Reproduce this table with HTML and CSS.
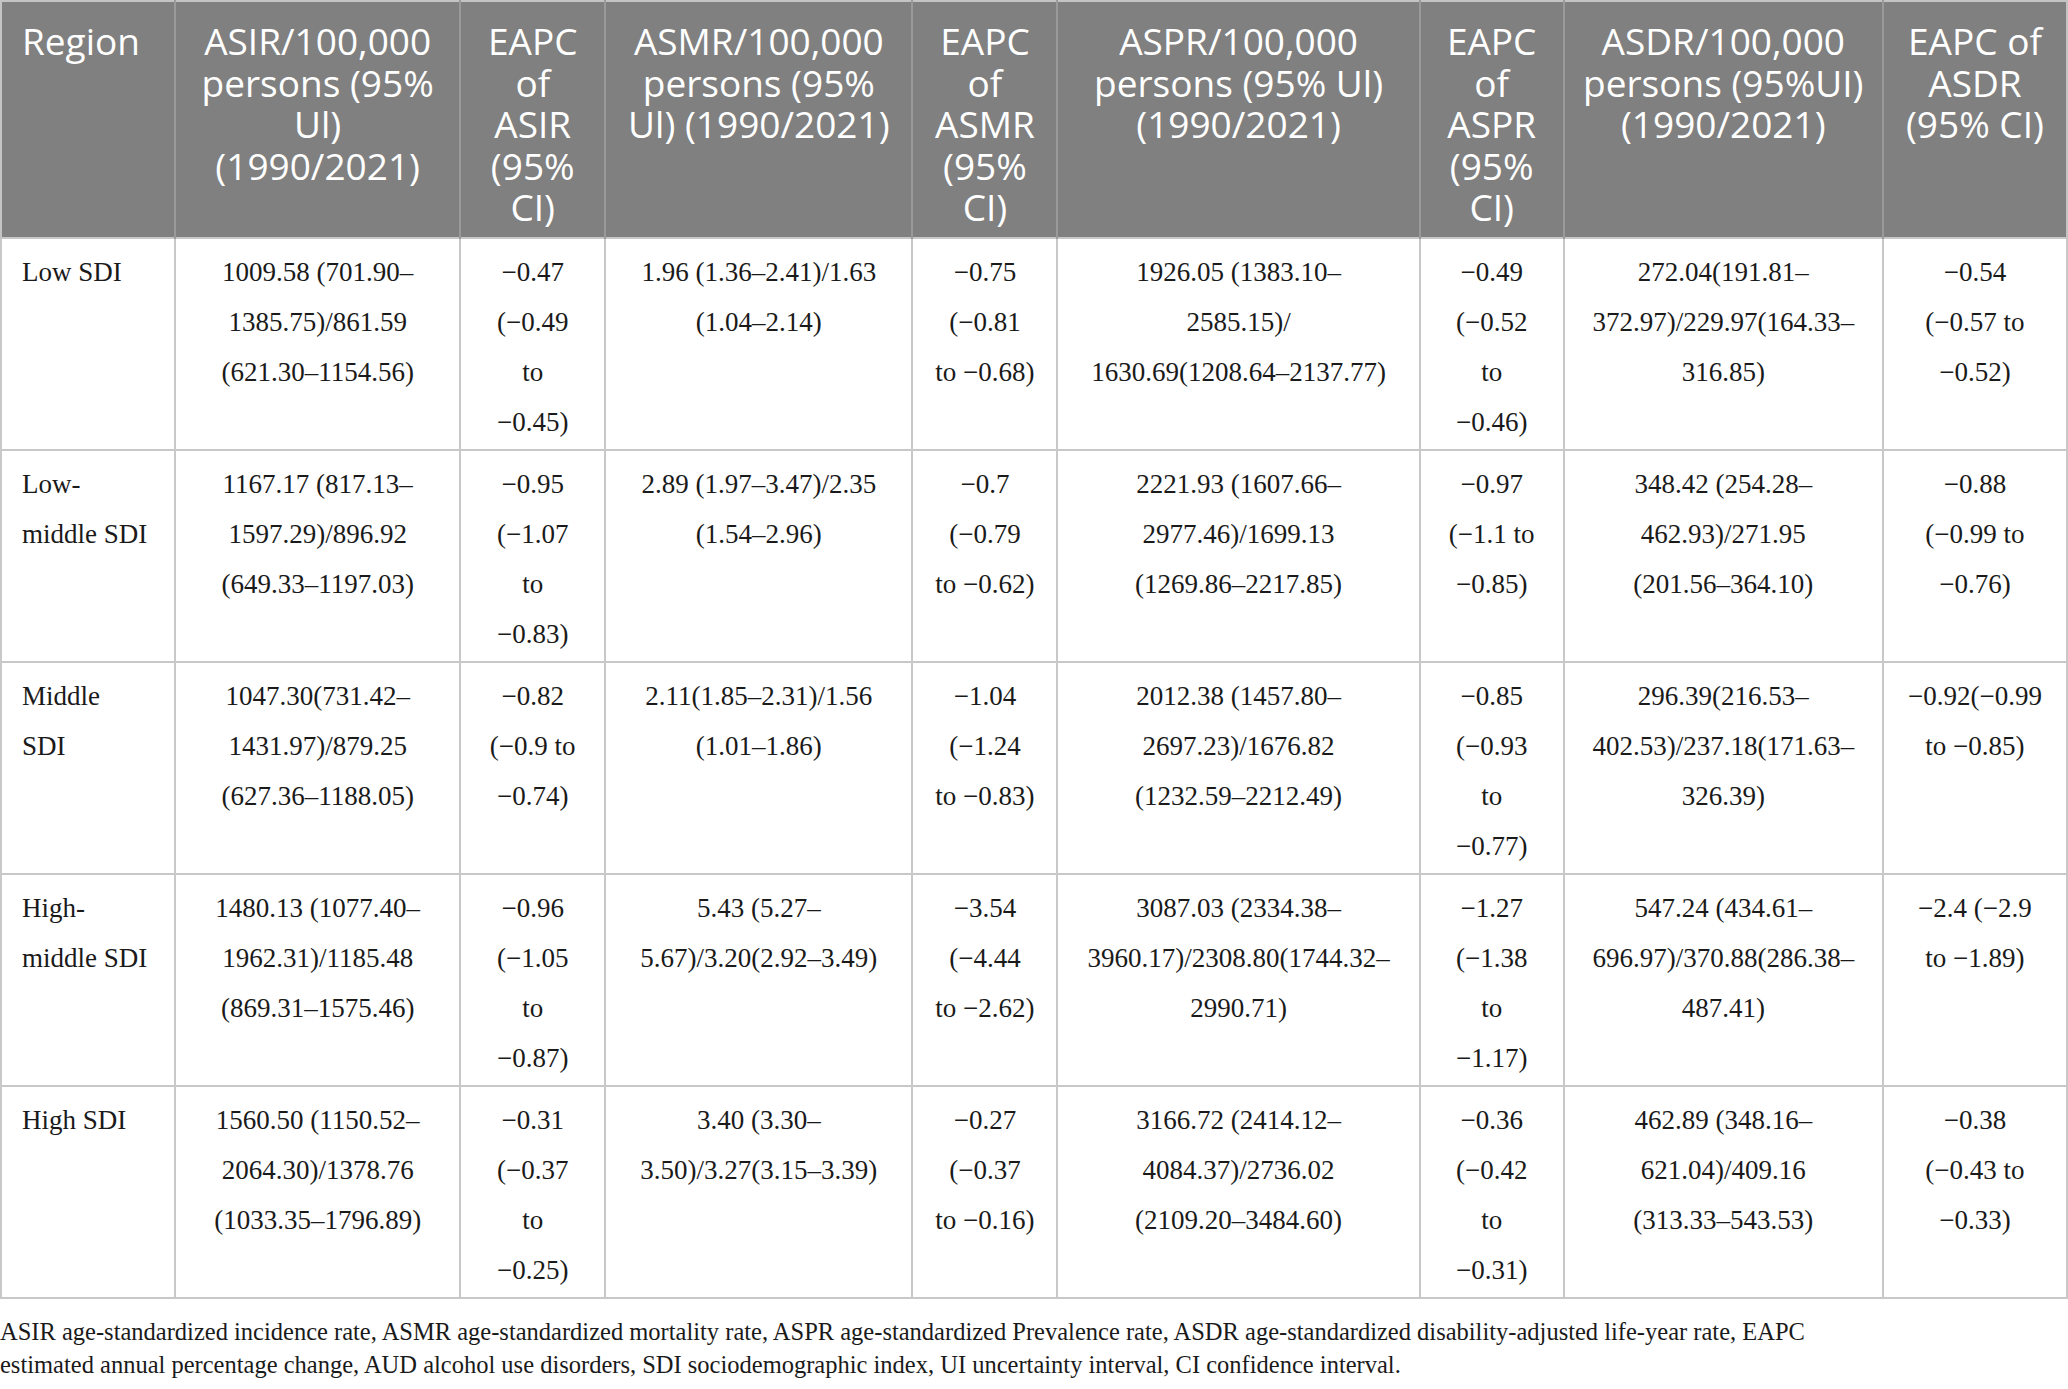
FILE: index.html
```html
<!DOCTYPE html>
<html lang="en">
  <head>
    <meta charset="UTF-8" />
    <meta name="viewport" content="width=device-width, initial-scale=1.0" />
    <title>AUD burden by SDI region, 1990/2021</title>
    <link rel="stylesheet" href="styles.css">
  </head>
  <body>
    <table class="data-table">
      <colgroup>
        <col class="col-region" />
        <col class="col-asir" />
        <col class="col-eapc" />
        <col class="col-asmr" />
        <col class="col-eapc" />
        <col class="col-aspr" />
        <col class="col-eapc-narrow" />
        <col class="col-asdr" />
        <col class="col-last" />
      </colgroup>
      <thead>
        <tr>
          <th class="head-region">Region</th>
          <th>ASIR/100,000<br />persons (95%<br />Ul)<br />(1990/2021)</th>
          <th>EAPC<br />of<br />ASIR<br />(95%<br />CI)</th>
          <th>ASMR/100,000<br />persons (95%<br />Ul) (1990/2021)</th>
          <th>EAPC<br />of<br />ASMR<br />(95%<br />CI)</th>
          <th>ASPR/100,000<br />persons (95% Ul)<br />(1990/2021)</th>
          <th>EAPC<br />of<br />ASPR<br />(95%<br />CI)</th>
          <th>ASDR/100,000<br />persons (95%UI)<br />(1990/2021)</th>
          <th>EAPC of<br />ASDR<br />(95% CI)</th>
        </tr>
      </thead>
      <tbody>
        <tr>
          <td class="cell-region">Low SDI</td>
          <td>1009.58 (701.90–<br />1385.75)/861.59<br />(621.30–1154.56)</td>
          <td>−0.47<br />(−0.49<br />to<br />−0.45)</td>
          <td>1.96 (1.36–2.41)/1.63<br />(1.04–2.14)</td>
          <td>−0.75<br />(−0.81<br />to −0.68)</td>
          <td>1926.05 (1383.10–<br />2585.15)/<br />1630.69(1208.64–2137.77)</td>
          <td>−0.49<br />(−0.52<br />to<br />−0.46)</td>
          <td>272.04(191.81–<br />372.97)/229.97(164.33–<br />316.85)</td>
          <td>−0.54<br />(−0.57 to<br />−0.52)</td>
        </tr>
        <tr>
          <td class="cell-region">Low-<br />middle SDI</td>
          <td>1167.17 (817.13–<br />1597.29)/896.92<br />(649.33–1197.03)</td>
          <td>−0.95<br />(−1.07<br />to<br />−0.83)</td>
          <td>2.89 (1.97–3.47)/2.35<br />(1.54–2.96)</td>
          <td>−0.7<br />(−0.79<br />to −0.62)</td>
          <td>2221.93 (1607.66–<br />2977.46)/1699.13<br />(1269.86–2217.85)</td>
          <td>−0.97<br />(−1.1 to<br />−0.85)</td>
          <td>348.42 (254.28–<br />462.93)/271.95<br />(201.56–364.10)</td>
          <td>−0.88<br />(−0.99 to<br />−0.76)</td>
        </tr>
        <tr>
          <td class="cell-region">Middle<br />SDI</td>
          <td>1047.30(731.42–<br />1431.97)/879.25<br />(627.36–1188.05)</td>
          <td>−0.82<br />(−0.9 to<br />−0.74)</td>
          <td>2.11(1.85–2.31)/1.56<br />(1.01–1.86)</td>
          <td>−1.04<br />(−1.24<br />to −0.83)</td>
          <td>2012.38 (1457.80–<br />2697.23)/1676.82<br />(1232.59–2212.49)</td>
          <td>−0.85<br />(−0.93<br />to<br />−0.77)</td>
          <td>296.39(216.53–<br />402.53)/237.18(171.63–<br />326.39)</td>
          <td>−0.92(−0.99<br />to −0.85)</td>
        </tr>
        <tr>
          <td class="cell-region">High-<br />middle SDI</td>
          <td>1480.13 (1077.40–<br />1962.31)/1185.48<br />(869.31–1575.46)</td>
          <td>−0.96<br />(−1.05<br />to<br />−0.87)</td>
          <td>5.43 (5.27–<br />5.67)/3.20(2.92–3.49)</td>
          <td>−3.54<br />(−4.44<br />to −2.62)</td>
          <td>3087.03 (2334.38–<br />3960.17)/2308.80(1744.32–<br />2990.71)</td>
          <td>−1.27<br />(−1.38<br />to<br />−1.17)</td>
          <td>547.24 (434.61–<br />696.97)/370.88(286.38–<br />487.41)</td>
          <td>−2.4 (−2.9<br />to −1.89)</td>
        </tr>
        <tr>
          <td class="cell-region">High SDI</td>
          <td>1560.50 (1150.52–<br />2064.30)/1378.76<br />(1033.35–1796.89)</td>
          <td>−0.31<br />(−0.37<br />to<br />−0.25)</td>
          <td>3.40 (3.30–<br />3.50)/3.27(3.15–3.39)</td>
          <td>−0.27<br />(−0.37<br />to −0.16)</td>
          <td>3166.72 (2414.12–<br />4084.37)/2736.02<br />(2109.20–3484.60)</td>
          <td>−0.36<br />(−0.42<br />to<br />−0.31)</td>
          <td>462.89 (348.16–<br />621.04)/409.16<br />(313.33–543.53)</td>
          <td>−0.38<br />(−0.43 to<br />−0.33)</td>
        </tr>
      </tbody>
    </table>

    <p class="table-note">
      ASIR age-standardized incidence rate, ASMR age-standardized mortality rate, ASPR age-standardized Prevalence rate, ASDR age-standardized disability-adjusted life-year rate, EAPC<br />
      estimated annual percentage change, AUD alcohol use disorders, SDI sociodemographic index, UI uncertainty interval, CI confidence interval.
    </p>
  </body>
</html>
```

FILE: styles.css
```css
body {
  margin: 0;
  background: #ffffff;
  font-family: "Liberation Serif", "Times New Roman", serif;
  color: #1a1a1a;
}
.data-table {
  width: 2068px;
  table-layout: fixed;
  border-collapse: collapse;
  border-top: 2px solid #c4c4c4;
}
.col-region { width: 174px; }
.col-asir { width: 285px; }
.col-eapc { width: 145px; }
.col-asmr { width: 307px; }
.col-aspr { width: 362px; }
.col-eapc-narrow { width: 144px; }
.col-asdr { width: 319px; }
.col-last { width: 184px; }

.data-table th {
  background: #808080;
  color: #ffffff;
  font-family: "Open Sans", "Noto Sans", sans-serif;
  font-weight: 400;
  font-size: 37px;
  line-height: 41.5px;
  text-align: center;
  vertical-align: top;
  padding: 18px 4px 9px;
  border-left: 2px solid #9a9a9a;
  white-space: nowrap;
}
.data-table th:first-child {
  border-left: 2px solid #c4c4c4;
}
.data-table th:last-child {
  border-right: 2px solid #c4c4c4;
}
.data-table .head-region {
  text-align: left;
  padding-left: 20px;
}
.data-table td {
  font-size: 27px;
  line-height: 50px;
  text-align: center;
  vertical-align: top;
  padding: 8px 4px 2px;
  border: 2px solid #c8c8c8;
  white-space: nowrap;
}
.data-table .cell-region {
  text-align: left;
  padding-left: 20px;
}
.table-note {
  margin: 16px 0 0;
  font-size: 24.5px;
  line-height: 33px;
  color: #1a1a1a;
  white-space: nowrap;
}
```
